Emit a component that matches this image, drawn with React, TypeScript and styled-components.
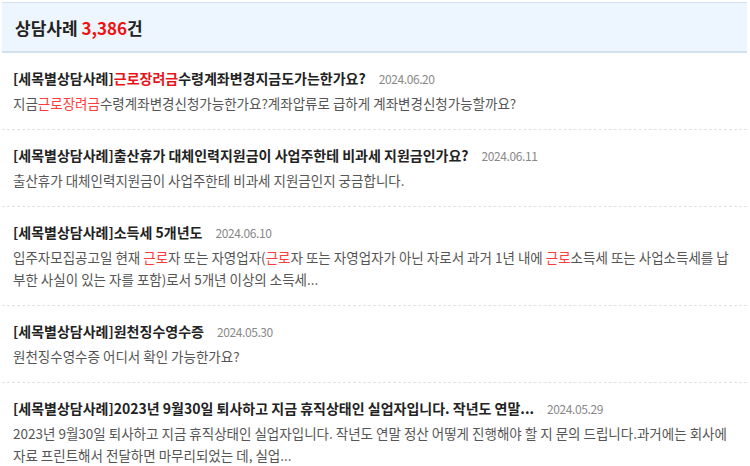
import React, { FC } from 'react';
import styled, { createGlobalStyle } from 'styled-components';

const GlobalStyle = createGlobalStyle`
  html, body {
    margin: 0;
    padding: 0;
    background: #fff;
  }
  body {
    font-family: 'Noto Sans CJK KR', 'Noto Sans', sans-serif;
  }
`;

const Page = styled.div`
  width: 750px;
  padding: 2px 3px 0 2px;
  box-sizing: border-box;
`;

const Header = styled.div`
  display: flex;
  align-items: center;
  height: 51px;
  box-sizing: border-box;
  padding-left: 13px;
  background: #edf6fe;
  border-top: 1px solid #d3e1ee;
  border-bottom: 2px solid #d3e1ee;
`;

const HeaderTitle = styled.h2`
  margin: 0;
  font-size: 17px;
  font-weight: 700;
  color: #222;
`;

const Count = styled.span`
  color: #f01010;
`;

const List = styled.ul`
  list-style: none;
  margin: 0;
  padding: 0;
`;

const Item = styled.li`
  display: flex;
  flex-direction: column;
  gap: 3px;
  padding: 15px 8px 15px 11px;
  border-bottom: 1px dashed #e2e2e2;
  &:last-child {
    border-bottom: none;
  }
`;

const TitleRow = styled.div`
  display: flex;
  align-items: baseline;
  gap: 13px;
  line-height: 20px;
`;

const Title = styled.span`
  font-size: 14px;
  font-weight: 700;
  color: #222;
  white-space: nowrap;
`;

const DateText = styled.span`
  font-size: 12px;
  letter-spacing: -0.4px;
  color: #888;
`;

const Desc = styled.p`
  margin: 0;
  font-size: 13.5px;
  line-height: 22px;
  color: #555;
  word-break: break-all;
`;

const Hl = styled.span<{ $soft?: boolean }>`
  color: ${({ $soft }) => ($soft ? '#ff3b3b' : '#e8141a')};
`;

type Part = string | { hl: string };

interface Case {
  title: Part[];
  date: string;
  desc: Part[];
}

const cases: Case[] = [
  {
    title: ['[세목별상담사례]', { hl: '근로장려금' }, '수령계좌변경지금도가는한가요?'],
    date: '2024.06.20',
    desc: ['지금', { hl: '근로장려금' }, '수령계좌변경신청가능한가요?계좌압류로 급하게 계좌변경신청가능할까요?'],
  },
  {
    title: ['[세목별상담사례]출산휴가 대체인력지원금이 사업주한테 비과세 지원금인가요?'],
    date: '2024.06.11',
    desc: ['출산휴가 대체인력지원금이 사업주한테 비과세 지원금인지 궁금합니다.'],
  },
  {
    title: ['[세목별상담사례]소득세 5개년도'],
    date: '2024.06.10',
    desc: [
      '입주자모집공고일 현재 ',
      { hl: '근로' },
      '자 또는 자영업자(',
      { hl: '근로' },
      '자 또는 자영업자가 아닌 자로서 과거 1년 내에 ',
      { hl: '근로' },
      '소득세 또는 사업소득세를 납부한 사실이 있는 자를 포함)로서 5개년 이상의 소득세...',
    ],
  },
  {
    title: ['[세목별상담사례]원천징수영수증'],
    date: '2024.05.30',
    desc: ['원천징수영수증 어디서 확인 가능한가요?'],
  },
  {
    title: ['[세목별상담사례]2023년 9월30일 퇴사하고 지금 휴직상태인 실업자입니다. 작년도 연말...'],
    date: '2024.05.29',
    desc: [
      '2023년 9월30일 퇴사하고 지금 휴직상태인 실업자입니다. 작년도 연말 정산 어떻게 진행해야 할 지 문의 드립니다.과거에는 회사에 자료 프린트해서 전달하면 마무리되었는 데, 실업...',
    ],
  },
];

const renderParts = (parts: Part[], soft?: boolean) =>
  parts.map((p, i) =>
    typeof p === 'string' ? (
      <React.Fragment key={i}>{p}</React.Fragment>
    ) : (
      <Hl key={i} $soft={soft}>
        {p.hl}
      </Hl>
    )
  );

const App: FC = () => (
  <Page>
    <GlobalStyle />
    <Header>
      <HeaderTitle>
        상담사례 <Count>3,386</Count>건
      </HeaderTitle>
    </Header>
    <List>
      {cases.map((c, i) => (
        <Item key={i}>
          <TitleRow>
            <Title>{renderParts(c.title)}</Title>
            <DateText>{c.date}</DateText>
          </TitleRow>
          <Desc>{renderParts(c.desc, true)}</Desc>
        </Item>
      ))}
    </List>
  </Page>
);

export default App;
